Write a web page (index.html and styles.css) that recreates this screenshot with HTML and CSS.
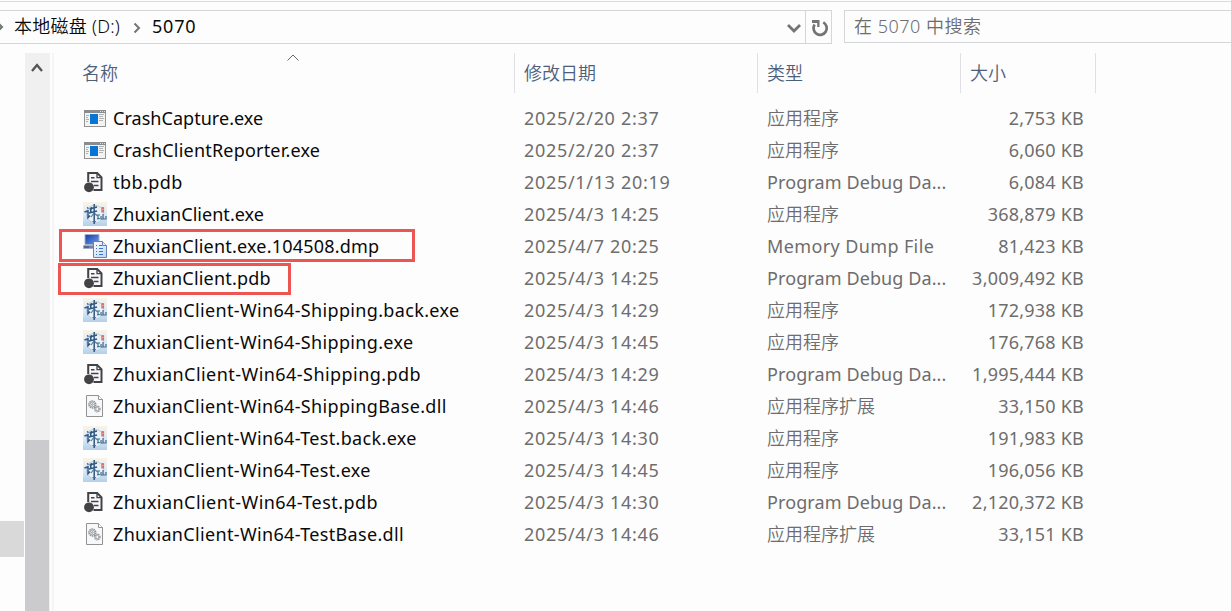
FILE: index.html
```html
<!DOCTYPE html>
<html lang="zh-CN">
<head>
<meta charset="utf-8">
<title>5070</title>
<link rel="stylesheet" href="styles.css">
</head>
<body>
<svg class="defs" aria-hidden="true">
  <symbol id="exe" viewBox="0 0 24 24">
    <rect x=".5" y="4.5" width="21" height="16" fill="#f3f3f4" stroke="#929495"/>
    <path d="M0 4h22v3H0z" fill="#898d90"/>
    <path d="M16 5.5h1m1 0h1m1 0h1" stroke="#dedede"/>
    <path d="M6 8h8v10H6z" fill="#0874d4"/>
    <path d="M2 9.5h3M2 11.5h2M2 13.5h3M2 15.5h2M15 8.5h5M15 10.5h4M15 12.5h5M15 14.5h4" stroke="#b0b2b4"/>
  </symbol>
  <symbol id="pdb" viewBox="0 0 24 24">
    <path d="M4.2 12V3h9l4.3 4.3V20H9.5" fill="#f8f8fa" stroke="#434347" stroke-width="2"/>
    <path d="M13 3v4.7h4.5" fill="none" stroke="#434347" stroke-width="1.3"/>
    <path d="M7 7.7h3.5M7 11.5h7.5M10 15.5h4.5" stroke="#434347" stroke-width="1.4"/>
    <circle cx="5" cy="17.3" r="4.9" fill="#434347"/>
  </symbol>
  <symbol id="game" viewBox="0 0 24 24">
    <defs>
      <linearGradient id="sky" x2="0" y2="1"><stop stop-color="#f8f3e8"/><stop offset=".55" stop-color="#dceaf6"/><stop offset="1" stop-color="#b4cfe7"/></linearGradient>
    </defs>
    <path d="M0 0h24v24H0z" fill="url(#sky)"/>
    <circle cx="12" cy="12" r="8.7" fill="#e8f1f8" stroke="#b4cee3"/>
    <path d="M4 5.5l1.5 1M1.5 10l3.5-1.2v6.8l2-2M6.5 7L14 5M8.5 5L7.5 10M6 11l8-2M11.2 2v20" fill="none" stroke="#31577e" stroke-width="1.5"/>
    <path d="M11 11l-3 4M11.5 11l2 2.5M9.5 19.5h3.5" fill="none" stroke="#4f7599" stroke-width="1.1"/>
    <path d="M13 13h4M15 13v4M14 17l3-.5M20 12v5M18 14v3h5v-3" fill="none" stroke="#426b94" stroke-width="1.2"/>
    <rect x="18.3" y="5" width="2.8" height="5.5" rx=".8" fill="#ce776d"/>
    <path d="M18.8 7.5h1.8" stroke="#f3c0b5" stroke-width=".7"/>
  </symbol>
  <symbol id="dmp" viewBox="0 0 24 24">
    <defs>
      <linearGradient id="screen" x2="1" y2="1"><stop stop-color="#1836a6"/><stop offset="1" stop-color="#6ba6f1"/></linearGradient>
      <linearGradient id="sheet" x2="1" y2="1"><stop stop-color="#fff"/><stop offset="1" stop-color="#bcd5f6"/></linearGradient>
    </defs>
    <path d="M2 .5h14v10H2z" fill="url(#screen)" stroke="#a6b1c7"/>
    <path d="M.5 11.5h16v3H.5z" fill="#7185ab" stroke="#a5afc2"/>
    <path d="M1 13h5" stroke="#354b79"/>
    <path d="M10.5 7.5h9l4 4v12h-13z" fill="url(#sheet)" stroke="#6581b5"/>
    <path d="M19.5 7.5v4h4" fill="#dceafc" stroke="#6581b5"/>
    <path d="M13 11.5h1m2 0h3M13 14.5h1m2 0h4M13 17.5h1m2 0h4M13 20.5h1m2 0h4" stroke="#3974c9" stroke-width="1.2"/>
  </symbol>
  <symbol id="dll" viewBox="0 0 24 24">
    <path d="M3.5 1.5h12l4 4v17h-16z" fill="#f8f8f8" stroke="#929292"/>
    <path d="M15.5 1.5v4h4" fill="#fff" stroke="#929292"/>
    <g fill="none" stroke="#8c9197">
      <circle cx="9.3" cy="10.5" r="3.4" stroke-width="1.5" stroke-dasharray="1.4 .7"/>
      <circle cx="9.3" cy="10.5" r="2.4" stroke-width=".8"/><circle cx="9.3" cy="10.5" r=".8"/>
      <circle cx="14.3" cy="15" r="2.7" stroke-width="1.4" stroke-dasharray="1.2 .7"/>
      <circle cx="14.3" cy="15" r="1.6" stroke-width=".8"/>
    </g>
  </symbol>
</svg>

<div class="window">
  <header class="toolbar">
    <div class="address">
      <svg class="crumb-start" viewBox="0 0 4 10"><path d="M-2 1l4 4-4 4" /></svg>
      <span class="drive">本地磁盘 (D:)</span>
      <svg class="crumb" viewBox="0 0 8 12"><path d="M1.5 1.5L6 6l-4.5 4.5"/></svg>
      <span class="folder">5070</span>
      <svg class="drop" viewBox="0 0 14 10"><path d="M1 2l6 6 6-6"/></svg>
      <span class="refresh"><svg viewBox="0 0 18 18"><path d="M12.3 3.4A6.6 6.6 0 1 1 3.6 5.6"/><path d="M1 1h7.5v7H6.2V4H1z"/></svg></span>
    </div>
    <div class="search">在 5070 中搜索</div>
  </header>
  <main class="content">
    <aside class="tree"><div class="selected"></div></aside>
    <div class="scrollbar"><svg viewBox="0 0 12 10"><path d="M1 8l5-6 5 6"/></svg><div class="thumb"></div></div>
    <section class="files">
      <div class="heads"><div class="h-name">名称<svg viewBox="0 0 12 7"><path d="M.5 6.5L6 1l5.5 5.5"/></svg></div><div>修改日期</div><div>类型</div><div>大小</div></div>
      <div class="row"><svg><use href="#exe" x="1"/></svg><b>CrashCapture.exe</b><time>2025/2/20 2:37</time><span>应用程序</span><i>2,753 KB</i></div>
      <div class="row"><svg><use href="#exe" x="1"/></svg><b class="loose">CrashClientReporter.exe</b><time>2025/2/20 2:37</time><span>应用程序</span><i>6,060 KB</i></div>
      <div class="row"><svg><use href="#pdb" x="1"/></svg><b class="wider">tbb.pdb</b><time>2025/1/13 20:19</time><span class="en">Program Debug Da...</span><i>6,084 KB</i></div>
      <div class="row"><svg><use href="#game"/></svg><b>ZhuxianClient.exe</b><time>2025/4/3 14:25</time><span>应用程序</span><i>368,879 KB</i></div>
      <div class="row"><svg><use href="#dmp"/></svg><b class="loose">ZhuxianClient.exe.104508.dmp</b><time>2025/4/7 20:25</time><span class="en dump-type">Memory Dump File</span><i>81,423 KB</i><em class="mark mark-dump"></em></div>
      <div class="row"><svg><use href="#pdb" x="1"/></svg><b class="loose">ZhuxianClient.pdb</b><time>2025/4/3 14:25</time><span class="en">Program Debug Da...</span><i>3,009,492 KB</i><em class="mark mark-pdb"></em></div>
      <div class="row"><svg><use href="#game"/></svg><b class="wide">ZhuxianClient-Win64-Shipping.back.exe</b><time>2025/4/3 14:29</time><span>应用程序</span><i>172,938 KB</i></div>
      <div class="row"><svg><use href="#game"/></svg><b class="wide">ZhuxianClient-Win64-Shipping.exe</b><time>2025/4/3 14:45</time><span>应用程序</span><i>176,768 KB</i></div>
      <div class="row"><svg><use href="#pdb" x="1"/></svg><b class="wider">ZhuxianClient-Win64-Shipping.pdb</b><time>2025/4/3 14:29</time><span class="en">Program Debug Da...</span><i>1,995,444 KB</i></div>
      <div class="row"><svg><use href="#dll"/></svg><b class="wide">ZhuxianClient-Win64-ShippingBase.dll</b><time>2025/4/3 14:46</time><span>应用程序扩展</span><i>33,150 KB</i></div>
      <div class="row"><svg><use href="#game"/></svg><b class="wide">ZhuxianClient-Win64-Test.back.exe</b><time>2025/4/3 14:30</time><span>应用程序</span><i>191,983 KB</i></div>
      <div class="row"><svg><use href="#game"/></svg><b class="wide">ZhuxianClient-Win64-Test.exe</b><time>2025/4/3 14:45</time><span>应用程序</span><i>196,056 KB</i></div>
      <div class="row"><svg><use href="#pdb" x="1"/></svg><b class="wider">ZhuxianClient-Win64-Test.pdb</b><time>2025/4/3 14:30</time><span class="en">Program Debug Da...</span><i>2,120,372 KB</i></div>
      <div class="row"><svg><use href="#dll"/></svg><b class="wide">ZhuxianClient-Win64-TestBase.dll</b><time>2025/4/3 14:46</time><span>应用程序扩展</span><i>33,151 KB</i></div>
    </section>
  </main>
</div>
</body>
</html>
```
FILE: styles.css
```css
* { box-sizing: border-box; }
body { margin: 0; background: #fdfdfe; font: 350 18px/32px "Noto Sans", "Noto Sans CJK SC", sans-serif; color: #6d6d6d; overflow: hidden; }
svg { display: block; flex: none; }
.defs { position: absolute; width: 0; height: 0; }
.window { width: 1231px; height: 611px; display: flex; flex-direction: column; }
.toolbar { height: 53px; flex: none; display: flex; align-items: flex-start; gap: 12px; padding-top: 8px; border-top: 1px solid #fdfdfe; box-shadow: inset 0 1px #d9dadc; }
.address { width: 832px; height: 34px; margin-top: 1px; border: 1px solid #d5d6da; border-left: 0; display: flex; align-items: center; color: #090909; white-space: nowrap; }
.address path { fill: none; stroke: #747474; stroke-width: 2; }
.crumb-start { width: 4px; height: 10px; }
.drive, .folder { height: 34px; }
.drive { margin-left: 10px; width: 107px; letter-spacing: .25px; }
.crumb { width: 8px; height: 12px; margin: 2px 11px 0 12px; }
.folder { flex: 1; font-weight: 400; letter-spacing: .8px; }
.drop { width: 14px; height: 10px; margin: 2px 4px 0 0; }
.address .drop path { stroke-width: 2.8; }
.refresh { width: 26px; height: 32px; border-left: 1px solid #d5d6da; display: grid; place-items: center; }
.refresh svg { width: 18px; height: 18px; margin: 2px 0 0 2px; }
.address .refresh path:first-child { stroke-width: 2.7; }
.address .refresh path:last-child { fill: #747474; stroke: none; }
.search { flex: 1; height: 33px; margin-top: 1px; border: 1px solid #d5d6da; border-right: 0; padding-left: 9px; line-height: 31px; letter-spacing: .5px; }
.content { display: flex; flex: 1; }
.tree { width: 25px; padding-top: 468px; }
.selected { width: 24px; height: 36px; background: #d9d9da; }
.scrollbar { width: 25px; background: #f0f0f1; display: flex; flex-direction: column; }
.scrollbar svg { width: 12px; height: 10px; margin: 10px 0 0 6px; }
.scrollbar path { fill: none; stroke: #555558; stroke-width: 2.4; }
.thumb { width: 24px; height: 171px; margin-top: auto; background: #cbcbcd; }
.files { flex: 1; margin-left: 2px; border-left: 2px solid #f5f5f8; padding-left: 28px; }
.heads { display: grid; grid-template-columns: 432px 243px 203px 136px; height: 49px; color: #4c607a; }
.heads > div { height: 40px; padding: 4px 0 0 9px; border-left: 1px solid #e1e1e5; }
.heads > div:first-child { padding-left: 0; border-left: 0; }
.heads > div:last-child { border-right: 1px solid #e1e1e5; }
.h-name { display: flex; }
.h-name svg { width: 12px; height: 7px; margin: -3px 0 0 169px; }
.h-name path { fill: none; stroke: #666; }
.row { position: relative; display: grid; grid-template-columns: 31px 411px 243px 182px 135px; height: 32px; align-items: center; white-space: nowrap; }
.row svg { width: 24px; height: 24px; margin-left: 1px; }
.row b { color: #090909; font-weight: 400; letter-spacing: .04px; }
.row .loose { letter-spacing: .2px; }
.row .wide { letter-spacing: .34px; }
.row .wider { letter-spacing: .45px; }
.row time { font-weight: 400; letter-spacing: .68px; }
.row .en { font-weight: 400; letter-spacing: .1px; }
.row .dump-type { letter-spacing: .38px; }
.row i { font-style: normal; font-weight: 400; text-align: right; letter-spacing: .22px; }
.mark { position: absolute; border: 3px solid #ed5553; }
.mark-dump { left: -23px; top: -1px; width: 356px; height: 33px; }
.mark-pdb { left: -24px; top: 1px; width: 233px; height: 32px; }
```
